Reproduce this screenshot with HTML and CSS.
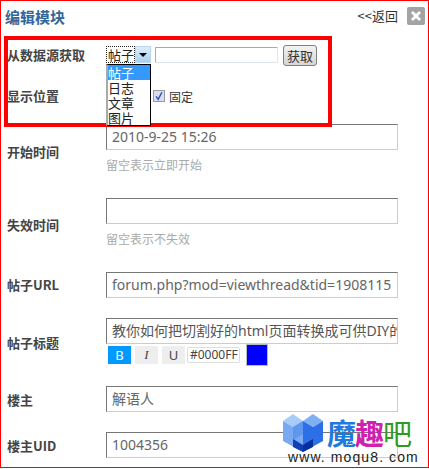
FILE: index.html
```html
<!DOCTYPE html>
<html lang="zh">
<head>
<meta charset="utf-8">
<title>编辑模块</title>
<link rel="stylesheet" href="styles.css">
</head>
<body>
<div class="panel">
  <header class="head">
    <h1 class="title">编辑模块</h1>
    <div class="head-actions">
      <a class="back">&lt;&lt;返回</a>
      <span class="close"><svg viewBox="0 0 12 12" width="12" height="12"><path d="M2 2L10 10M10 2L2 10" stroke="#fff" stroke-width="3"/></svg></span>
    </div>
  </header>
  <form class="form">
    <div class="row row-source">
      <label class="label">从数据源获取</label>
      <div class="field inline">
        <div class="select"><span class="select-value">帖子</span><span class="select-arrow"></span></div>
        <div class="source-input"></div>
        <button type="button" class="fetch">获取</button>
      </div>
    </div>
    <div class="row row-place">
      <label class="label">显示位置</label>
      <div class="field inline place">
        <span class="check"><svg viewBox="0 0 12 12" width="10" height="10"><path d="M2.5 6.5L5 10L9.5 1.5" fill="none" stroke="#2f55b0" stroke-width="1.8"/></svg></span>
        <span class="check-label">固定</span>
      </div>
    </div>
    <div class="row row-start">
      <label class="label">开始时间</label>
      <div class="field">
        <div class="input">2010-9-25 15:26</div>
        <p class="hint">留空表示立即开始</p>
      </div>
    </div>
    <div class="row row-end">
      <label class="label">失效时间</label>
      <div class="field">
        <div class="input"></div>
        <p class="hint">留空表示不失效</p>
      </div>
    </div>
    <div class="row row-url">
      <label class="label">帖子URL</label>
      <div class="field"><div class="input">forum.php?mod=viewthread&amp;tid=1908115</div></div>
    </div>
    <div class="row row-subject">
      <label class="label">帖子标题</label>
      <div class="field">
        <div class="input clip">教你如何把切割好的html页面转换成可供DIY的</div>
        <div class="format">
          <span class="fmt fmt-on">B</span>
          <span class="fmt fmt-i">I</span>
          <span class="fmt">U</span>
          <span class="color-code">#0000FF</span>
          <span class="swatch"></span>
        </div>
      </div>
    </div>
    <div class="row row-author">
      <label class="label">楼主</label>
      <div class="field"><div class="input">解语人</div></div>
    </div>
    <div class="row row-uid">
      <label class="label">楼主UID</label>
      <div class="field"><div class="input">1004356</div></div>
    </div>
  </form>

  <div class="highlight"></div>
  <ul class="dropdown">
    <li class="opt opt-on">帖子</li>
    <li class="opt">日志</li>
    <li class="opt">文章</li>
    <li class="opt">图片</li>
  </ul>
  <div class="watermark">
    <svg class="logo" viewBox="0 0 40 38" width="40" height="38">
      <path d="M0 7L10 0L20 7L10 13Z" fill="#a8ccfa"/>
      <path d="M20 7L30 0L40 7L30 13Z" fill="#7fb0f4"/>
      <path d="M0 7L10 13L20 7V38L0 27Z" fill="#78a9f2"/>
      <path d="M10 13L20 7V20L10 26Z" fill="#5f96ee"/>
      <path d="M20 7L30 13L40 7V27L20 38Z" fill="#2c6fe6"/>
      <path d="M10 25L20 31V38L10 33Z" fill="#0f3fb5"/>
      <path d="M30 25L20 31V38L30 33Z" fill="#0a2f9c"/>
    </svg>
    <div class="brand"><span class="b1">魔</span><span class="b2">趣</span><span class="b3">吧</span></div>
    <div class="url">www. moqu8. com</div>
  </div>
</div>
</body>
</html>
```
FILE: styles.css
```css
* { box-sizing: border-box; }
html, body { margin: 0; padding: 0; }
body {
  width: 429px;
  height: 469px;
  overflow: hidden;
  background: #fff;
  font-family: "Noto Sans CJK SC", "Noto Sans", sans-serif;
  color: #333;
}
.panel {
  position: relative;
  width: 429px;
  height: 468px;
  border: 1px solid #f00;
  overflow: hidden;
}
.head {
  display: flex;
  justify-content: space-between;
  align-items: center;
  height: 30px;
  padding: 0 3px 0 4px;
}
.title {
  margin: 0;
  font-size: 15px;
  font-weight: 700;
  color: #369;
}
.head-actions { display: flex; align-items: center; gap: 9px; }
.back { font-size: 13px; line-height: 18px; color: #333; }
.close {
  display: flex;
  align-items: center;
  justify-content: center;
  width: 18px;
  height: 18px;
  border-radius: 2px;
  background: #a3a3a3;
}
.form { display: flex; flex-direction: column; }
.row { display: grid; grid-template-columns: 99px 292px; padding-left: 6px; }
.label {
  font-size: 13px;
  font-weight: 700;
  color: #444;
  line-height: 16px;
}
.field { min-width: 0; }
.inline { display: flex; align-items: center; }
.row-source { height: 28px; margin-top: 10px; align-items: center; }
.row-place { height: 30px; margin-top: 12px; align-items: center; }
.row-start { margin-top: 13px; height: 74px; }
.row-end { height: 74px; }
.row-url { height: 46px; }
.row-subject { height: 68px; }
.row-author { height: 46px; }
.row-uid { height: 26px; }
.row-start .label { margin-top: 20px; }
.row-end .label { margin-top: 19px; }
.row-url .label { margin-top: 5px; }
.row-subject .label { margin-top: 17px; }
.row-author .label { margin-top: 6px; }
.row-uid .label { margin-top: 6px; }
.select {
  display: flex;
  flex: none;
  width: 45px;
  height: 17px;
  margin-bottom: 2px;
  font-size: 13px;
  line-height: 15px;
}
.select-value {
  flex: none;
  width: 29px;
  height: 17px;
  white-space: nowrap;
  border: 1px dotted #222;
  padding-left: 1px;
  color: #222;
}
.select-arrow {
  position: relative;
  flex: 1;
  background: linear-gradient(#dcecfb, #a9d0f2);
  border: 1px solid #bcd6ee;
}
.select-arrow::after {
  content: "";
  position: absolute;
  left: 3px;
  top: 6px;
  border: 4px solid transparent;
  border-top: 4px solid #000;
  border-bottom: 0;
}
.source-input {
  width: 123px;
  height: 16px;
  margin-left: 4px;
  background: #fff;
  border: 1px solid #ddd;
  border-top-color: #aaa;
  border-left-color: #aaa;
  border-bottom-color: #dde6ee;
  border-right-color: #dde6ee;
  border-radius: 1px;
}
.fetch {
  width: 34px;
  height: 21px;
  margin-left: 5px;
  padding: 0;
  font: 13px/17px "Noto Sans CJK SC", sans-serif;
  color: #333;
  background: linear-gradient(#f2f2f2, #d6d6d6);
  border: 1px solid #7f7f7f;
  border-radius: 3px;
}
.place { padding-left: 47px; }
.check {
  display: flex;
  align-items: center;
  justify-content: center;
  width: 12px;
  height: 12px;
  background: #dcdcf0;
  border: 1px solid #9a9a9a;
}
.check-label { margin-left: 4px; font-size: 12px; color: #333; }
.input {
  height: 26px;
  padding: 0 5px;
  font: 14px/24px "Noto Sans", "Noto Sans CJK SC", sans-serif;
  color: #666;
  background: #fff;
  border: 1px solid #ccc;
  border-top-color: #777;
  border-left-color: #777;
  white-space: nowrap;
  overflow: hidden;
}
.clip { color: #555; }
.hint {
  margin: 8px 0 0;
  font-size: 12px;
  line-height: 14px;
  color: #aaa;
}
.format {
  display: flex;
  align-items: center;
  gap: 4px;
  margin-top: 0;
  padding-left: 2px;
  height: 22px;
}
.fmt {
  width: 23px;
  height: 18px;
  font: 13px/18px "Noto Sans", sans-serif;
  text-align: center;
  color: #444;
  background: #eee;
}
.fmt-on { background: #09f; color: #fff; }
.fmt-i { font-style: italic; font-family: "Liberation Serif", serif; }
.fmt + .color-code { margin-left: -2px; }
.color-code {
  width: 53px;
  height: 16px;
  padding-left: 2px;
  font: 12px/14px "Noto Sans", sans-serif;
  color: #444;
  border: 1px solid #ddd;
  border-radius: 2px;
  white-space: nowrap;
  overflow: hidden;
}
.swatch {
  width: 22px;
  height: 22px;
  margin-left: 2px;
  background: #00f;
  border: 1px solid #bbb;
}
.highlight {
  position: absolute;
  left: 3px;
  top: 35px;
  width: 328px;
  height: 91px;
  border: 4px solid #f00;
  pointer-events: none;
}
.dropdown {
  position: absolute;
  left: 105px;
  top: 63px;
  width: 45px;
  margin: 0;
  padding: 0;
  list-style: none;
  background: #fff;
  border: 1px solid #000;
  border-left: 2px solid #aaa;
}
.opt {
  height: 15px;
  font-size: 13px;
  line-height: 15px;
  color: #222;
}
.opt-on { background: #3399ff; color: #fff; }
.watermark {
  position: absolute;
  left: 282px;
  top: 413px;
  width: 140px;
  height: 52px;
}
.logo { position: absolute; left: 0; top: 0; }
.brand {
  position: absolute;
  left: 44px;
  top: 1px;
  display: flex;
  font-size: 29px;
  font-weight: 700;
  line-height: 34px;
  letter-spacing: -1px;
  white-space: nowrap;
}
.b1 { color: #1f7ae0; }
.b2 { color: #d020b0; }
.b3 { color: #2f9a20; font-weight: 400; }
.url {
  position: absolute;
  left: 5px;
  top: 35px;
  font: 14px/16px "Liberation Sans", sans-serif;
  letter-spacing: 1.1px;
  color: #222;
  white-space: nowrap;
}
```
